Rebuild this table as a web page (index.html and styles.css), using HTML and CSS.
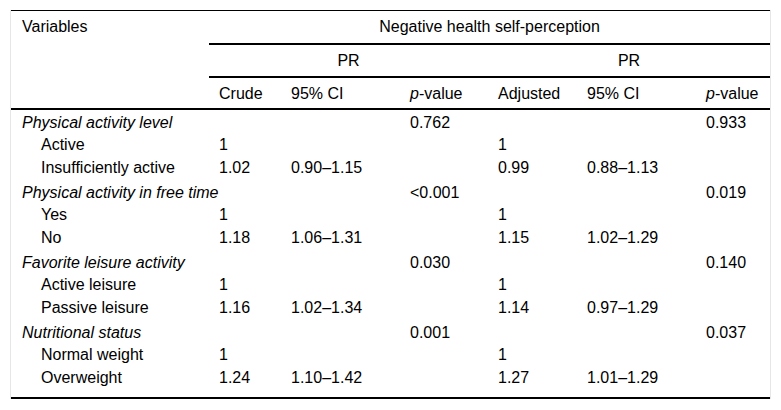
FILE: index.html
```html
<!DOCTYPE html>
<html lang="en">
<head>
<meta charset="utf-8">
<title>Negative health self-perception</title>
<link rel="stylesheet" href="styles.css">
</head>
<body>
<div class="wrap">
<table class="tbl">
<colgroup>
<col class="c1"><col class="c2"><col class="c3"><col class="c4"><col class="c5"><col class="c6"><col class="c7">
</colgroup>
<thead>
<tr class="h1">
<th rowspan="3" class="var">Variables</th>
<th colspan="6" class="center rule">Negative health self-perception</th>
</tr>
<tr class="h2">
<th colspan="3" class="center rule">PR</th>
<th colspan="3" class="center rule">PR</th>
</tr>
<tr class="h3">
<th class="rule">Crude</th>
<th class="rule">95% CI</th>
<th class="rule"><i>p</i>-value</th>
<th class="rule">Adjusted</th>
<th class="rule">95% CI</th>
<th class="rule"><i>p</i>-value</th>
</tr>
</thead>
<tbody>
<tr class="grp"><td><i>Physical activity level</i></td><td></td><td></td><td>0.762</td><td></td><td></td><td>0.933</td></tr>
<tr class="sub"><td>Active</td><td>1</td><td></td><td></td><td>1</td><td></td><td></td></tr>
<tr class="sub"><td>Insufficiently active</td><td>1.02</td><td>0.90–1.15</td><td></td><td>0.99</td><td>0.88–1.13</td><td></td></tr>
<tr class="grp"><td colspan="3"><i>Physical activity in free time</i></td><td>&lt;0.001</td><td></td><td></td><td>0.019</td></tr>
<tr class="sub"><td>Yes</td><td>1</td><td></td><td></td><td>1</td><td></td><td></td></tr>
<tr class="sub"><td>No</td><td>1.18</td><td>1.06–1.31</td><td></td><td>1.15</td><td>1.02–1.29</td><td></td></tr>
<tr class="grp"><td><i>Favorite leisure activity</i></td><td></td><td></td><td>0.030</td><td></td><td></td><td>0.140</td></tr>
<tr class="sub"><td>Active leisure</td><td>1</td><td></td><td></td><td>1</td><td></td><td></td></tr>
<tr class="sub"><td>Passive leisure</td><td>1.16</td><td>1.02–1.34</td><td></td><td>1.14</td><td>0.97–1.29</td><td></td></tr>
<tr class="grp"><td><i>Nutritional status</i></td><td></td><td></td><td>0.001</td><td></td><td></td><td>0.037</td></tr>
<tr class="sub"><td>Normal weight</td><td>1</td><td></td><td></td><td>1</td><td></td><td></td></tr>
<tr class="sub last"><td>Overweight</td><td>1.24</td><td>1.10–1.42</td><td></td><td>1.27</td><td>1.01–1.29</td><td></td></tr>
</tbody>
</table>
</div>
</body>
</html>
```
FILE: styles.css
```css
html, body {
  margin: 0;
  padding: 0;
  background: #fff;
}

.wrap {
  margin: 10px 10px 0 10px;
  border-left: 1px solid #e6e6e6;
  border-right: 1px solid #e6e6e6;
}

.tbl {
  width: 759px;
  table-layout: fixed;
  border-collapse: separate;
  border-spacing: 0;
  border-top: 1px solid #000;
  border-bottom: 2px solid #000;
  font-family: "Liberation Sans", Arial, sans-serif;
  font-size: 16px;
  line-height: 18px;
  color: #000;
}

.c1 { width: 198px; }
.c2 { width: 72px; }
.c3 { width: 119px; }
.c4 { width: 88px; }
.c5 { width: 89px; }
.c6 { width: 119px; }
.c7 { width: 74px; }

.tbl th {
  font-weight: normal;
  text-align: left;
  vertical-align: top;
  padding: 7px 0 0 10px;
  white-space: nowrap;
}

.tbl th.var {
  padding-left: 11px;
  border-bottom: 2px solid #000;
}

.tbl th.center {
  text-align: center;
  padding-left: 0;
}

.tbl th.rule {
  border-bottom: 2px solid #000;
}

.h1 th { height: 25px; }
.h2 th { height: 24px; }
.h3 th { height: 23px; }

.tbl td {
  padding: 2px 0 3px 10px;
  white-space: nowrap;
  vertical-align: top;
}

.tbl tr.grp td {
  padding-top: 4px;
  padding-bottom: 2px;
}

.tbl tr td:first-child {
  padding-left: 11px;
}

.tbl tr.sub td:first-child {
  padding-left: 30px;
}

.tbl tr.last td {
  padding-bottom: 10px;
}
```
